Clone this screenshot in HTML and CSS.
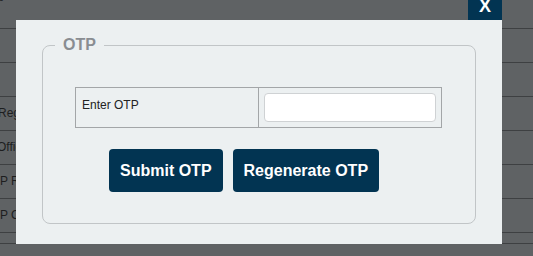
FILE: index.html
```html
<!DOCTYPE html>
<html>
<head>
<meta charset="utf-8">
<link rel="stylesheet" href="styles.css">
</head>
<body>
<div class="page">
  <div class="row row-top"><span class="label label-top">Details</span></div>
  <div class="row"><span class="label"></span></div>
  <div class="row"><span class="label"></span></div>
  <div class="row"><span class="label cut2">Registration No</span></div>
  <div class="row"><span class="label cut3">Office Name</span></div>
  <div class="row"><span class="label">P Received</span></div>
  <div class="row"><span class="label">P On</span></div>
  <div class="row row-short"><span class="label"></span></div>
</div>

<div class="modal">
  <button class="close" type="button">X</button>
  <fieldset class="otp-box">
    <legend class="otp-legend">OTP</legend>
    <table class="otp-table">
      <tr>
        <td class="otp-label">Enter OTP</td>
        <td class="otp-input-cell"><input class="otp-input" type="text"></td>
      </tr>
    </table>
    <div class="actions">
      <button class="btn" type="button">Submit OTP</button>
      <button class="btn" type="button">Regenerate OTP</button>
    </div>
  </fieldset>
</div>
</body>
</html>
```

FILE: styles.css
```css
* { box-sizing: border-box; }

html, body {
  margin: 0;
  padding: 0;
}

body {
  width: 533px;
  height: 256px;
  overflow: hidden;
  background: #5f6264;
  font-family: "Liberation Sans", Arial, sans-serif;
  position: relative;
}

.page {
  display: flex;
  flex-direction: column;
}

.row {
  height: 34px;
  border-bottom: 1px solid #3e4042;
  display: flex;
  align-items: center;
  padding-top: 2px;
  font-size: 12px;
  color: #1d1e1f;
  white-space: nowrap;
  overflow: hidden;
  flex-shrink: 0;
}

.row-top {
  height: 29px;
  align-items: flex-start;
  padding-top: 0;
}

.row-short {
  height: 11px;
}

.label {
  display: block;
  margin-top: -4px;
}

.label-top {
  margin-top: -10px;
  margin-left: -33px;
}

.cut2 { margin-left: -2px; }
.cut3 { margin-left: -3px; }

.modal {
  position: absolute;
  left: 16px;
  top: 20px;
  width: 486px;
  height: 224px;
  background: #ecf0f1;
  padding: 16px 26px 0 26px;
}

.close {
  position: absolute;
  right: 0;
  top: -35px;
  width: 34px;
  height: 35px;
  margin: 0;
  border: 0;
  padding: 11px 0 4px 0;
  background: #023452;
  color: #ffffff;
  font-family: "Liberation Sans", Arial, sans-serif;
  font-weight: bold;
  font-size: 18px;
  line-height: 20px;
  text-align: center;
}

.otp-box {
  margin: 0;
  padding: 0;
  height: 188px;
  border: 1px solid #c1c5c7;
  border-radius: 8px;
}

.otp-legend {
  margin-left: 12px;
  padding: 0 8px;
  font-size: 16px;
  line-height: 18px;
  font-weight: bold;
  color: #898d91;
}

.otp-table {
  margin: 33px 0 0 32px;
  width: 367px;
  height: 41px;
  border-collapse: collapse;
}

.otp-table td {
  border: 1px solid #a3a6a8;
  width: 50%;
  vertical-align: top;
}

.otp-label {
  padding: 9px 6px 0 6px;
  font-size: 12px;
  line-height: 16px;
  color: #222222;
}

.otp-input-cell {
  padding: 5px;
}

.otp-input {
  display: block;
  width: 100%;
  height: 29px;
  margin: 0;
  border: 1px solid #cfd2d4;
  border-radius: 4px;
  background: #ffffff;
}

.actions {
  display: flex;
  gap: 10px;
  margin: 21px 0 0 66px;
}

.btn {
  height: 43px;
  margin: 0;
  padding: 0 11px;
  border: 0;
  border-radius: 4px;
  background: #023452;
  color: #ffffff;
  font-family: "Liberation Sans", Arial, sans-serif;
  font-weight: bold;
  font-size: 16px;
}
```
